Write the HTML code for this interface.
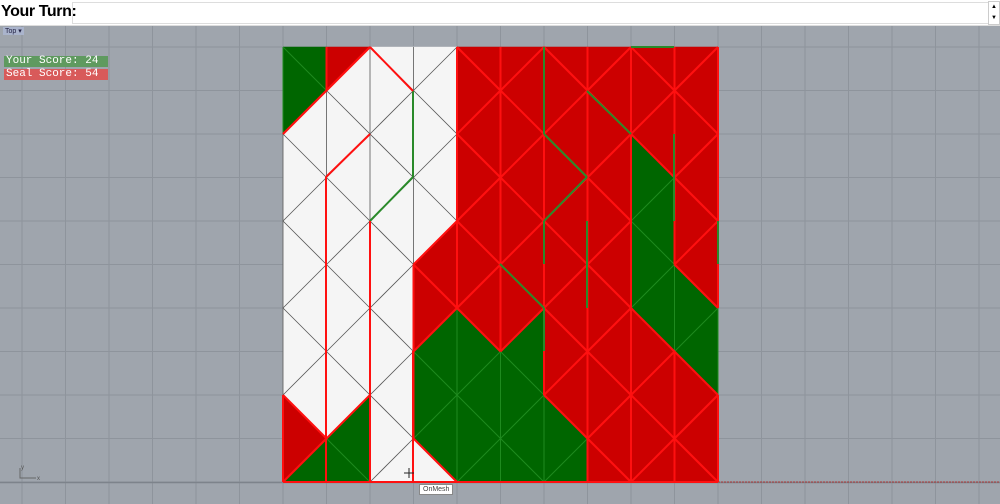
<!DOCTYPE html>
<html><head><meta charset="utf-8"><style>
body{margin:0;width:1000px;height:504px;overflow:hidden;background:#9fa5ad;font-family:"Liberation Sans",sans-serif;position:relative}
#top{position:absolute;left:0;top:0;width:1000px;height:25px;background:#fff;border-bottom:1px solid #ddd}
#top b{position:absolute;left:1px;top:3px;font-size:16px;letter-spacing:-0.4px;color:#000;z-index:2}
#inp{position:absolute;left:72px;top:2px;width:916px;height:20px;border:1px solid #ddd;background:#fff}
#sb{position:absolute;left:988px;top:1px;width:10px;height:22px;border:1px solid #ccc;background:#fff;font-size:6px;line-height:11px;text-align:center}
.sc{position:absolute;left:4px;width:104px;height:11px;font-family:"Liberation Mono",monospace;font-size:11px;line-height:11px;color:#fff;padding-left:2px;box-sizing:border-box}
#tp{position:absolute;left:3px;top:27px;font-size:7px;color:#224;background:#aab4cc;padding:0 2px}
#om{position:absolute;left:419px;top:484px;font-size:7px;color:#444;background:#fff;border:1px solid #888;padding:1px 3px}
svg{position:absolute;left:0;top:0}
</style></head><body>
<svg id="s" width="1000" height="504"></svg>
<div id="top"><div id="inp"></div><b>Your Turn:</b><div id="sb">▲<br>▼</div></div>
<div id="tp">Top ▾</div>
<div class="sc" style="top:56px;background:#5f9a5f">Your Score: 24</div>
<div class="sc" style="top:69px;background:#d85a5a">Seal Score: 54</div>
<div id="om">OnMesh</div>
<script>
var X=i=>283+43.5*i,Y=j=>47+43.5*j;
var W='W',R='R',G='G';
var C=[
[[G,G],[G,W],[W,W],[W,W],[W,W],[W,W],[W,W],[W,W],[R,W],[R,G]],
[[R,W],[W,W],[W,W],[W,W],[W,W],[W,W],[W,W],[W,W],[W,G],[G,G]],
[[W,W],[W,W],[W,W],[W,W],[W,W],[W,W],[W,W],[W,W],[W,W],[W,W]],
[[W,W],[W,W],[W,W],[W,W],[W,R],[R,R],[R,G],[G,G],[G,G],[W,G]],
[[R,R],[R,R],[R,R],[R,R],[R,R],[R,R],[G,R],[G,G],[G,G],[G,G]],
[[R,R],[R,R],[R,R],[R,R],[R,R],[R,R],[R,G],[G,G],[G,G],[G,G]],
[[R,R],[R,R],[R,R],[R,R],[R,R],[R,R],[R,R],[R,R],[G,R],[G,G]],
[[R,R],[R,R],[R,R],[R,R],[R,R],[R,R],[R,R],[R,R],[R,R],[R,R]],
[[R,R],[R,R],[G,R],[G,G],[G,G],[G,G],[R,G],[R,R],[R,R],[R,R]],
[[R,R],[R,R],[R,R],[R,R],[R,R],[G,R],[G,G],[R,G],[R,R],[R,R]]];
var fill={W:'#f5f5f5',R:'#cc0000',G:'#006600'};
var s='';
for(var k=-7;k<17;k++){var x=X(k);s+='<line x1="'+x+'" y1="26" x2="'+x+'" y2="504" stroke="#8e949c" stroke-width="1"/>';}
for(var k=-1;k<11;k++){var y=Y(k);s+='<line x1="0" y1="'+y+'" x2="1000" y2="'+y+'" stroke="#8e949c" stroke-width="1"/>';}
s+='<line x1="0" y1="482.5" x2="1000" y2="482.5" stroke="#7d838b" stroke-width="1.5"/>';
s+='<line x1="718" y1="482" x2="1000" y2="482" stroke="#a33" stroke-width="1" stroke-dasharray="2,1"/>';
function P(a){return a.map(p=>p[0]+','+p[1]).join(' ')}
for(var i=0;i<10;i++)for(var j=0;j<10;j++){
 var x0=X(i),x1=X(i+1),y0=Y(j),y1=Y(j+1),c=C[i][j],ev=(i+j)%2==0,A,B;
 if(ev){A=[[x0,y0],[x0,y1],[x1,y1]];B=[[x0,y0],[x1,y0],[x1,y1]];}
 else{A=[[x0,y0],[x0,y1],[x1,y0]];B=[[x1,y0],[x1,y1],[x0,y1]];}
 s+='<polygon points="'+P(A)+'" fill="'+fill[c[0]]+'" stroke="'+fill[c[0]]+'" stroke-width="0.5"/>';
 s+='<polygon points="'+P(B)+'" fill="'+fill[c[1]]+'" stroke="'+fill[c[1]]+'" stroke-width="0.5"/>';
}
function col(a,b){if(a=='W'&&b=='W')return['#555',0.8];if(a=='G'&&b=='G')return['#1f8a1f',1];return['#ff1010',2];}
var L='';
function ln(x1,y1,x2,y2,a,b){var c=col(a,b);var t='<line x1="'+x1+'" y1="'+y1+'" x2="'+x2+'" y2="'+y2+'" stroke="'+c[0]+'" stroke-width="'+c[1]+'"/>';if(c[1]==2)L+=t;else s+=t;}
for(var i=0;i<10;i++)for(var j=0;j<10;j++){
 var c=C[i][j],ev=(i+j)%2==0;
 if(ev)ln(X(i),Y(j),X(i+1),Y(j+1),c[0],c[1]);else ln(X(i),Y(j+1),X(i+1),Y(j),c[0],c[1]);
 var lft=i>0?C[i-1][j][1]:c[0];ln(X(i),Y(j),X(i),Y(j+1),lft,c[0]);
 if(i==9)ln(X(10),Y(j),X(10),Y(j+1),c[1],c[1]);
}
s+=L;
var g=[[544,47,544,134],[544,134,587,177],[587,177,544,221],[544,221,544,264],[587,91,631,134],[674,134,674,221],[587,264,587,308],[587,221,587,264],[500,264,544,308],[544,308,544,351],[674,47,631,47],[413,91,413,177],[413,177,370,221],[326,308,326,395],[370,308,370,395],[718,221,718,264]];
g.forEach(a=>{s+='<line x1="'+a[0]+'" y1="'+a[1]+'" x2="'+a[2]+'" y2="'+a[3]+'" stroke="#2a8a2a" stroke-width="2"/>'});
var r=[[370,47,413,91],[326,177,370,134],[326,177,326,482],[370,221,370,482],[413,351,413,482],[283,134,370,47]];
r.forEach(a=>{s+='<line x1="'+a[0]+'" y1="'+a[1]+'" x2="'+a[2]+'" y2="'+a[3]+'" stroke="#ff1010" stroke-width="2"/>'});
s+='<line x1="283" y1="482" x2="718" y2="482" stroke="#ff1010" stroke-width="2"/>';
s+='<path d="M20 468 V478 H36" fill="none" stroke="#666" stroke-width="1"/><text x="21" y="469" font-size="6" fill="#555">y</text><text x="37" y="480" font-size="6" fill="#555">x</text>';
s+='<path d="M404 473h10M409 468v10" stroke="#222" stroke-width="1"/>';
document.getElementById('s').innerHTML=s;
</script>
</body></html>
